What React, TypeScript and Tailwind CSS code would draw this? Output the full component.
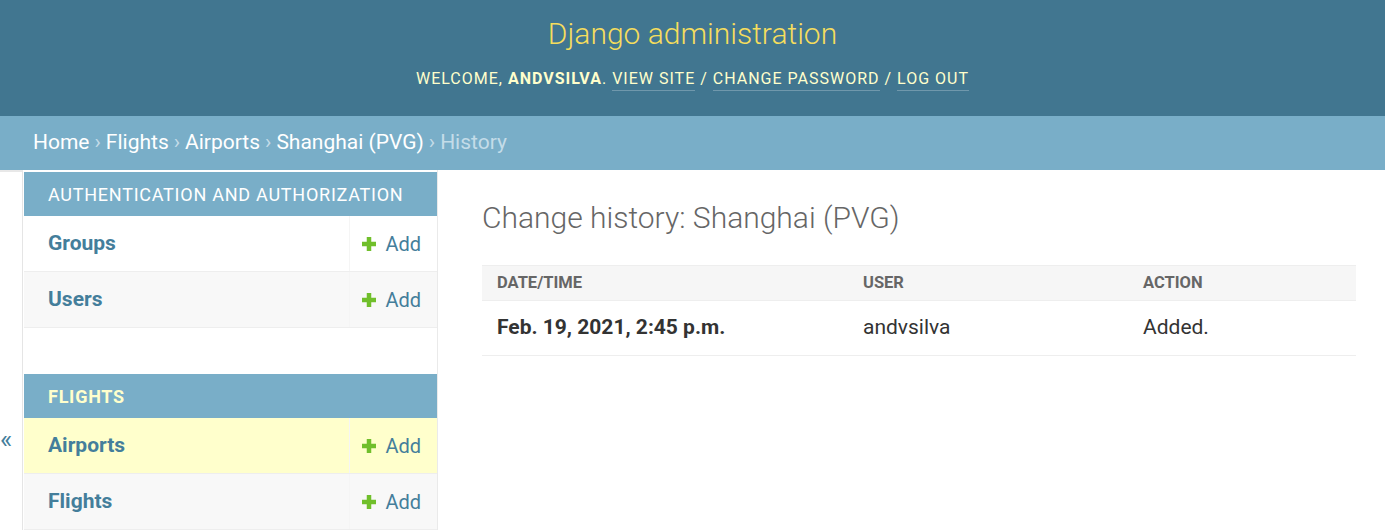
import React from 'react';

const font = { fontFamily: 'Roboto, "Liberation Sans", sans-serif' };

interface ModelRow {
  name: string;
  current?: boolean;
}

interface AppSection {
  title: string;
  current?: boolean;
  models: ModelRow[];
}

const apps: AppSection[] = [
  {
    title: 'Authentication and Authorization',
    models: [{ name: 'Groups' }, { name: 'Users' }],
  },
  {
    title: 'Flights',
    current: true,
    models: [{ name: 'Airports', current: true }, { name: 'Flights' }],
  },
];

const PlusIcon = () => (
  <svg width="14" height="14" viewBox="0 0 14 14" className="shrink-0">
    <rect x="0" y="4.75" width="14" height="4.5" fill="#70bf2b" />
    <rect x="4.75" y="0" width="4.5" height="14" fill="#70bf2b" />
  </svg>
);

const Sidebar: React.FC = () => (
  <div className="w-[414px] shrink-0 border-r border-[#eaeaea] pt-[2px]">
    {apps.map((app, i) => (
      <div key={app.title} className={i > 0 ? 'mt-[46px]' : ''}>
        <div
          className={`h-[44px] flex items-center pl-[24px] bg-[#79aec8] text-[18px] uppercase tracking-[0.75px] ${
            app.current ? 'text-[#ffffcc] font-bold' : 'text-white'
          }`}
        >
          {app.title}
        </div>
        {app.models.map((m, j) => (
          <div
            key={m.name}
            className={`flex h-[56px] border-b border-[#eeeeee] ${
              m.current ? 'bg-[#ffffcc]' : j % 2 === 1 ? 'bg-[#f8f8f8]' : 'bg-white'
            }`}
          >
            <div className="flex-1 flex items-center pl-[24px] pt-[1px] text-[21px] font-bold text-[#447e9b]">
              {m.name}
            </div>
            <div className="w-[88px] border-l border-[#f5f5f5] flex items-center justify-end gap-[9px] pr-[16px] text-[20px] text-[#447e9b]">
              <PlusIcon />
              <span>Add</span>
            </div>
          </div>
        ))}
      </div>
    ))}
  </div>
);

const App: React.FC = () => {
  return (
    <div className="min-h-[531px] bg-white" style={font}>
      {/* Header */}
      <div className="h-[116px] bg-[#417690] flex flex-col items-center pt-[15px]">
        <h1 className="text-[30px] font-light leading-[38px] text-[#f5dd5d]">Django administration</h1>
        <div className="mt-[16px] text-[16px] uppercase tracking-[1px] text-[#ffffcc] leading-[20px]">
          Welcome, <strong className="font-bold">andvsilva</strong>.{' '}
          <span className="border-b border-white/25 pb-[2px]">View site</span> /{' '}
          <span className="border-b border-white/25 pb-[2px]">Change password</span> /{' '}
          <span className="border-b border-white/25 pb-[2px]">Log out</span>
        </div>
      </div>

      {/* Breadcrumbs */}
      <div className="h-[54px] bg-[#79aec8] flex items-center pl-[33px] text-[21px] text-white">
        <span>Home</span>
        <span className="mx-[5px] text-[#c4dce8]">›</span>
        <span>Flights</span>
        <span className="mx-[5px] text-[#c4dce8]">›</span>
        <span>Airports</span>
        <span className="mx-[5px] text-[#c4dce8]">›</span>
        <span>Shanghai (PVG)</span>
        <span className="mx-[5px] text-[#c4dce8]">›</span>
        <span className="text-[#c4dce8]">History</span>
      </div>

      <div className="flex">
        {/* Sidebar toggle */}
        <div className="w-[23px] shrink-0 border-r border-[#e5e5e5] border-t-2 border-t-[#e8e8e8] mr-[1px] pt-[254px] text-[26px] text-[#447e9b] leading-none">
          «
        </div>

        <Sidebar />

        {/* Content */}
        <div className="flex-1 pl-[44px] pr-[29px] pt-[29px]">
          <h1 className="text-[30px] font-light text-[#666666] leading-[38px]">
            Change history: Shanghai (PVG)
          </h1>
          <table className="mt-[28px] w-full border-collapse">
            <thead>
              <tr className="bg-[#f6f6f6] border-t border-b border-[#eeeeee] h-[35px]">
                <th className="w-[366px] text-left pl-[15px] text-[16.5px] font-bold uppercase text-[#666666]">Date/time</th>
                <th className="w-[280px] text-left pl-[15px] text-[16.5px] font-bold uppercase text-[#666666]">User</th>
                <th className="text-left pl-[15px] text-[16.5px] font-bold uppercase text-[#666666]">Action</th>
              </tr>
            </thead>
            <tbody>
              <tr className="border-b border-[#eeeeee] h-[55px]">
                <th className="text-left pl-[15px] text-[21px] font-bold text-[#333333]">Feb. 19, 2021, 2:45 p.m.</th>
                <td className="pl-[15px] text-[21px] text-[#333333]">andvsilva</td>
                <td className="pl-[15px] text-[21px] text-[#333333]">Added.</td>
              </tr>
            </tbody>
          </table>
        </div>
      </div>
    </div>
  );
};

export default App;
